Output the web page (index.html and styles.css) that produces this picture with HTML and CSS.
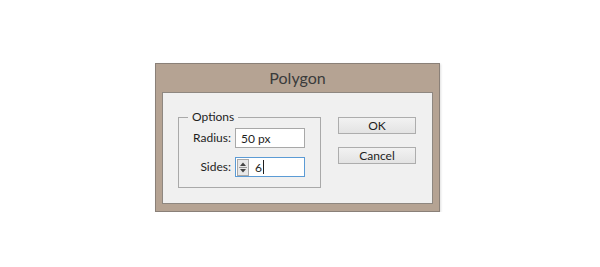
FILE: index.html
```html
<!doctype html>
<html lang="en">

<head>
	<meta charset="UTF-8" />
	<title>Polygon</title>
	<link rel="stylesheet" href="styles.css">
</head>

<body>
	<div class="dialog">
		<div class="title">Polygon</div>

		<div class="panel">
			<fieldset class="options">
				<legend>Options</legend>

				<label for="radius">Radius:</label>
				<div class="field">
					<span class="value" id="radius">50 px</span>
				</div>

				<label for="sides">Sides:</label>
				<div class="field focused">
					<span class="spinner">
						<svg width="10" height="15" viewBox="0 0 10 15">
							<path d="M5 2.5 L8 6 L2 6 Z" fill="#444444" />
							<line x1="1" y1="7.5" x2="9" y2="7.5" stroke="#9a9a9a" />
							<path d="M5 12.5 L8 9 L2 9 Z" fill="#444444" />
						</svg>
					</span>
					<span class="value" id="sides">6</span><span class="caret"></span>
				</div>
			</fieldset>

			<div class="buttons">
				<button type="button">OK</button>
				<button type="button">Cancel</button>
			</div>
		</div>
	</div>
</body>

</html>
```

FILE: styles.css
```css
body {
	margin: 0;
	padding: 63px 0 0 155px;
	background: #ffffff;
	font-family: Lato, "Open Sans", sans-serif;
	color: #1e1e1e;
}

.dialog {
	width: 283px;
	height: 147px;
	border: 1px solid #8a8078;
	background-color: #b5a393;
	box-shadow: 1px 1px 2px rgba(0, 0, 0, 0.12);
	display: flex;
	flex-direction: column;
}

.title {
	height: 28px;
	line-height: 28px;
	text-align: center;
	font-size: 16px;
	color: #3b3b3b;
}

.panel {
	margin: 0 6px 0 6px;
	height: 110px;
	border: 1px solid #8e8780;
	background-color: #f0f0f0;
	display: flex;
	align-items: flex-start;
	padding-left: 15px;
}

.options {
	margin: 16px 0 0 0;
	padding: 3px 0 0 0;
	width: 141px;
	height: 74px;
	border: 1px solid #a9a9a9;
	box-sizing: content-box;
	display: grid;
	grid-template-columns: 52px 70px;
	grid-auto-rows: 20px;
	column-gap: 4px;
	row-gap: 9px;
	align-content: start;
	font-size: 12px;
}

.options legend {
	margin-left: 9px;
	padding: 0 4px;
	font-size: 12px;
	line-height: 16px;
	color: #1e1e1e;
}

.options label {
	text-align: right;
	line-height: 20px;
}

.field {
	height: 20px;
	border: 1px solid #a8a8a8;
	background: #ffffff;
	box-sizing: border-box;
	display: flex;
	align-items: center;
	padding-left: 5px;
	font-size: 12px;
}

.field.focused {
	border-color: #5b9bd5;
	padding-left: 1px;
}

.spinner {
	width: 12px;
	height: 17px;
	border: 1px solid #a8a8a8;
	background: #e8e8e8;
	box-sizing: border-box;
	display: flex;
	align-items: center;
	justify-content: center;
	margin-right: 6px;
}

.spinner svg {
	display: block;
}

.caret {
	width: 1px;
	height: 14px;
	background: #1e1e1e;
	margin-left: 1px;
}

.buttons {
	margin: 24px 0 0 17px;
	display: flex;
	flex-direction: column;
	gap: 13px;
}

.buttons button {
	width: 78px;
	height: 17px;
	padding: 0;
	border: 1px solid #adadad;
	background: linear-gradient(#f2f2f2, #e3e3e3);
	font-family: Lato, "Open Sans", sans-serif;
	font-size: 12px;
	line-height: 15px;
	color: #1e1e1e;
	cursor: pointer;
}
```
